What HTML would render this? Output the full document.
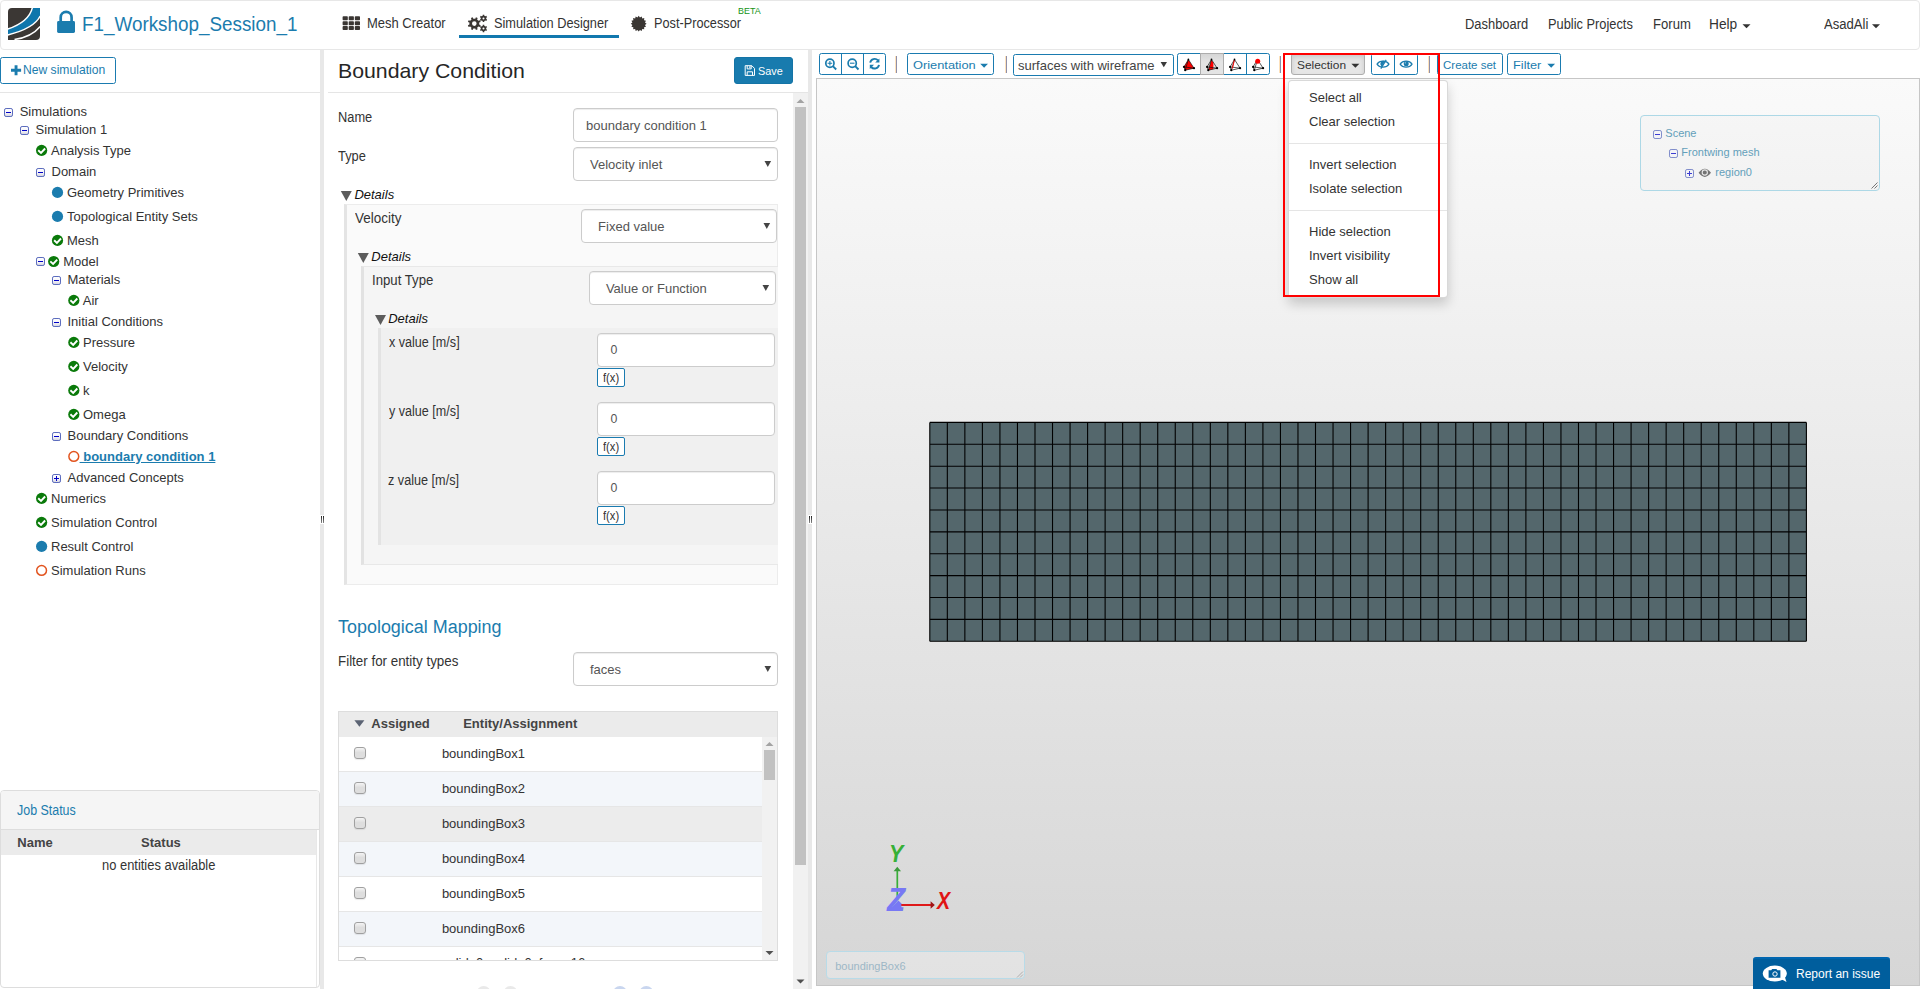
<!DOCTYPE html>
<html lang="en">
<head>
<meta charset="utf-8">
<title>F1_Workshop_Session_1 - Simulation Designer</title>
<style>
*{box-sizing:border-box;margin:0;padding:0}
html,body{width:1920px;height:989px;overflow:hidden;background:#fff}
body{position:relative;font-family:"Liberation Sans",sans-serif;font-size:13px;color:#333}
.a{position:absolute}
.t{position:absolute;white-space:nowrap;line-height:1;transform-origin:0 0}
svg{position:absolute;overflow:visible}
.g{position:absolute;left:0;top:0;width:0;height:0}
#hdrbox{position:absolute;left:0;top:0;width:1920px;height:50px;background:#fff;border:1px solid #e7e7e7;border-radius:4px}
.sp{position:absolute;top:50px;width:4px;height:939px;background:#e8e8e8}
.btn{position:absolute;border:1px solid #1a7bb0;border-radius:2.5px;background:#fff}
.inp{position:absolute;border:1px solid #ccc;border-radius:4px;background:#fff;box-shadow:inset 0 1px 1px rgba(0,0,0,.075)}
</style>
</head>
<body>
<div id="hdrbox"></div>
<div class="g" id="hdr">
<svg style="left:8px;top:8px" width="32" height="32" viewBox="8 8 32 32">
<path d="M12,8 H40 V36 A4,4 0 0 1 36,40 H8 V12 A4,4 0 0 1 12,8 Z" fill="#3b3734"/>
<path d="M32.3,8 L40,8 L40,16.3 Q34,28.5 8,34.8 L8,28.9 Q28.85,22 32.3,8 Z" fill="#0e76ac"/>
<path d="M32.4,7.6 Q28.85,22 7.8,29" fill="none" stroke="#fff" stroke-width="1.5"/>
<path d="M40.2,16 Q34,28.5 7.8,34.9" fill="none" stroke="#fff" stroke-width="1.5"/>
<path d="M40.2,26.5 Q31.55,36.95 14.5,39.6" fill="none" stroke="#fff" stroke-width="1.5"/>
</svg>
<svg style="left:57px;top:10px" width="18" height="23" viewBox="57 10 18 23">
<path d="M60.7,21.5 V17.4 A5.45,5.45 0 0 1 71.6,17.4 V21.5" fill="none" stroke="#1b7cae" stroke-width="2.7"/>
<rect x="57.1" y="21" width="17.9" height="11.9" rx="1.4" fill="#1b7cae"/>
</svg>
<span class="t" style="left:82.25px;top:14.69px;font-size:19.5px;color:#1b7cae;transform:scaleX(0.9665);">F1_Workshop_Session_1</span>
<svg style="left:0;top:0" width="1" height="1"><g fill="#3a3633"><rect x="342.6" y="16.3" width="5.2" height="4" rx="0.8"/><rect x="342.6" y="21.2" width="5.2" height="4" rx="0.8"/><rect x="342.6" y="26.1" width="5.2" height="4" rx="0.8"/><rect x="348.7" y="16.3" width="5.2" height="4" rx="0.8"/><rect x="348.7" y="21.2" width="5.2" height="4" rx="0.8"/><rect x="348.7" y="26.1" width="5.2" height="4" rx="0.8"/><rect x="354.8" y="16.3" width="5.2" height="4" rx="0.8"/><rect x="354.8" y="21.2" width="5.2" height="4" rx="0.8"/><rect x="354.8" y="26.1" width="5.2" height="4" rx="0.8"/></g></svg>
<span class="t" style="left:367.33px;top:16.15px;font-size:14px;transform:scaleX(0.9277);">Mesh Creator</span>
<span class="t" style="left:494.32px;top:16.15px;font-size:14px;transform:scaleX(0.9122);">Simulation Designer</span>
<div class="a" style="left:459px;top:35px;width:160px;height:3px;background:#1278ae"></div>
<svg style="left:0;top:0" width="1" height="1"><g fill="#3a3633" fill-rule="evenodd"><path d="M479.20,24.58 L480.69,25.24 L479.98,26.96 L478.46,26.38 L477.08,27.76 L477.66,29.28 L475.94,29.99 L475.28,28.50 L473.32,28.50 L472.66,29.99 L470.94,29.28 L471.52,27.76 L470.14,26.38 L468.62,26.96 L467.91,25.24 L469.40,24.58 L469.40,22.62 L467.91,21.96 L468.62,20.24 L470.14,20.82 L471.52,19.44 L470.94,17.92 L472.66,17.21 L473.32,18.70 L475.28,18.70 L475.94,17.21 L477.66,17.92 L477.08,19.44 L478.46,20.82 L479.98,20.24 L480.69,21.96 L479.20,22.62 Z M476.60,23.60 A2.3,2.3 0 1 0 472.00,23.60 A2.3,2.3 0 1 0 476.60,23.60 Z"/><path d="M486.22,19.05 L487.11,19.58 L486.33,20.94 L485.43,20.43 L484.30,21.08 L484.28,22.12 L482.72,22.12 L482.70,21.08 L481.57,20.43 L480.67,20.94 L479.89,19.58 L480.78,19.05 L480.78,17.75 L479.89,17.22 L480.67,15.86 L481.57,16.37 L482.70,15.72 L482.72,14.68 L484.28,14.68 L484.30,15.72 L485.43,16.37 L486.33,15.86 L487.11,17.22 L486.22,17.75 Z M484.50,18.40 A1.0,1.0 0 1 0 482.50,18.40 A1.0,1.0 0 1 0 484.50,18.40 Z"/><path d="M486.22,29.15 L487.11,29.68 L486.33,31.04 L485.43,30.53 L484.30,31.18 L484.28,32.22 L482.72,32.22 L482.70,31.18 L481.57,30.53 L480.67,31.04 L479.89,29.68 L480.78,29.15 L480.78,27.85 L479.89,27.32 L480.67,25.96 L481.57,26.47 L482.70,25.82 L482.72,24.78 L484.28,24.78 L484.30,25.82 L485.43,26.47 L486.33,25.96 L487.11,27.32 L486.22,27.85 Z M484.50,28.50 A1.0,1.0 0 1 0 482.50,28.50 A1.0,1.0 0 1 0 484.50,28.50 Z"/><path d="M646.60,23.70 L644.98,24.95 L646.00,26.72 L644.02,27.26 L644.29,29.29 L642.26,29.02 L641.72,31.00 L639.95,29.98 L638.70,31.60 L637.45,29.98 L635.68,31.00 L635.14,29.02 L633.11,29.29 L633.38,27.26 L631.40,26.72 L632.42,24.95 L630.80,23.70 L632.42,22.45 L631.40,20.68 L633.38,20.14 L633.11,18.11 L635.14,18.38 L635.68,16.40 L637.45,17.42 L638.70,15.80 L639.95,17.42 L641.72,16.40 L642.26,18.38 L644.29,18.11 L644.02,20.14 L646.00,20.68 L644.98,22.45 Z"/></g></svg>
<span class="t" style="left:653.56px;top:16.15px;font-size:14px;transform:scaleX(0.9086);">Post-Processor</span>
<span class="t" style="left:738.17px;top:7.11px;font-size:9.2px;color:#159415;transform:scaleX(0.9709);">BETA</span>
<span class="t" style="left:1465.14px;top:17.15px;font-size:14px;transform:scaleX(0.9225);">Dashboard</span>
<span class="t" style="left:1548.15px;top:17.15px;font-size:14px;transform:scaleX(0.9160);">Public Projects</span>
<span class="t" style="left:1652.63px;top:17.15px;font-size:14px;transform:scaleX(0.9353);">Forum</span>
<span class="t" style="left:1709.38px;top:17.15px;font-size:14px;transform:scaleX(0.9793);">Help</span>
<span class="t" style="left:1823.97px;top:17.15px;font-size:14px;transform:scaleX(0.9355);">AsadAli</span>
<svg style="left:0;top:0" width="1" height="1"><path d="M1742.5,24.3 h8 l-4,4 z M1872,24.3 h8 l-4,4 z" fill="#333"/></svg>
</div>
<div class="g" id="left">
<div class="btn" style="left:0;top:57px;width:116px;height:27px"></div>
<svg style="left:0;top:0" width="1" height="1"><path d="M11,68.8 h3.6 v-3.5 h2.9 v3.5 h3.6 v2.9 h-3.6 v3.5 h-2.9 v-3.5 h-3.6 z" fill="#1b7cae"/></svg>
<span class="t" style="left:22.80px;top:64.83px;font-size:11.9px;color:#1b7cae;transform:scaleX(1.0193);">New simulation</span>
<div class="a" style="left:0;top:92px;width:320px;height:1px;background:#e5e5e5"></div>
<svg style="left:0;top:0" width="1" height="1"><defs><linearGradient id="eg" x1="0" y1="0" x2="0" y2="1"><stop offset="0" stop-color="#fff"/><stop offset=".55" stop-color="#f4f4f8"/><stop offset="1" stop-color="#d2d2dc"/></linearGradient></defs><rect x="4.5" y="108.5" width="8" height="8" rx="1.6" fill="url(#eg)" stroke="#5a6bbd"/><rect x="6" y="112" width="5" height="1" fill="#0000c8"/><rect x="20.5" y="126.5" width="8" height="8" rx="1.6" fill="url(#eg)" stroke="#5a6bbd"/><rect x="22" y="130" width="5" height="1" fill="#0000c8"/><circle cx="41.6" cy="150.4" r="5.6" fill="#0a7a0a"/><path d="M38.2,150.3 L41.0,152.9 L45.1,148.5" fill="none" stroke="#fff" stroke-width="1.9"/><rect x="36.5" y="168.5" width="8" height="8" rx="1.6" fill="url(#eg)" stroke="#5a6bbd"/><rect x="38" y="172" width="5" height="1" fill="#0000c8"/><circle cx="57.5" cy="192.4" r="5.6" fill="#1b7cae"/><circle cx="57.5" cy="216.4" r="5.6" fill="#1b7cae"/><circle cx="57.5" cy="240.4" r="5.6" fill="#0a7a0a"/><path d="M54.1,240.3 L56.9,242.9 L61.0,238.5" fill="none" stroke="#fff" stroke-width="1.9"/><rect x="36.5" y="257.5" width="8" height="8" rx="1.6" fill="url(#eg)" stroke="#5a6bbd"/><rect x="38" y="261" width="5" height="1" fill="#0000c8"/><circle cx="53.7" cy="261.5" r="5.6" fill="#0a7a0a"/><path d="M50.300000000000004,261.4 L53.1,264.0 L57.2,259.6" fill="none" stroke="#fff" stroke-width="1.9"/><rect x="52.5" y="276.5" width="8" height="8" rx="1.6" fill="url(#eg)" stroke="#5a6bbd"/><rect x="54" y="280" width="5" height="1" fill="#0000c8"/><circle cx="73.8" cy="300.4" r="5.6" fill="#0a7a0a"/><path d="M70.39999999999999,300.29999999999995 L73.2,302.9 L77.3,298.5" fill="none" stroke="#fff" stroke-width="1.9"/><rect x="52.5" y="318.5" width="8" height="8" rx="1.6" fill="url(#eg)" stroke="#5a6bbd"/><rect x="54" y="322" width="5" height="1" fill="#0000c8"/><circle cx="73.8" cy="342.4" r="5.6" fill="#0a7a0a"/><path d="M70.39999999999999,342.29999999999995 L73.2,344.9 L77.3,340.5" fill="none" stroke="#fff" stroke-width="1.9"/><circle cx="73.8" cy="366.4" r="5.6" fill="#0a7a0a"/><path d="M70.39999999999999,366.29999999999995 L73.2,368.9 L77.3,364.5" fill="none" stroke="#fff" stroke-width="1.9"/><circle cx="73.8" cy="390.4" r="5.6" fill="#0a7a0a"/><path d="M70.39999999999999,390.29999999999995 L73.2,392.9 L77.3,388.5" fill="none" stroke="#fff" stroke-width="1.9"/><circle cx="73.8" cy="414.4" r="5.6" fill="#0a7a0a"/><path d="M70.39999999999999,414.29999999999995 L73.2,416.9 L77.3,412.5" fill="none" stroke="#fff" stroke-width="1.9"/><rect x="52.5" y="432.5" width="8" height="8" rx="1.6" fill="url(#eg)" stroke="#5a6bbd"/><rect x="54" y="436" width="5" height="1" fill="#0000c8"/><circle cx="73.8" cy="456.4" r="4.9" fill="#fff" stroke="#e2541f" stroke-width="1.5"/><rect x="52.5" y="474.5" width="8" height="8" rx="1.6" fill="url(#eg)" stroke="#5a6bbd"/><rect x="54" y="478" width="5" height="1" fill="#0000c8"/><rect x="56" y="476" width="1" height="5" fill="#0000c8"/><circle cx="41.6" cy="498.4" r="5.6" fill="#0a7a0a"/><path d="M38.2,498.29999999999995 L41.0,500.9 L45.1,496.5" fill="none" stroke="#fff" stroke-width="1.9"/><circle cx="41.6" cy="522.4" r="5.6" fill="#0a7a0a"/><path d="M38.2,522.3 L41.0,524.9 L45.1,520.5" fill="none" stroke="#fff" stroke-width="1.9"/><circle cx="41.6" cy="546.4" r="5.6" fill="#1b7cae"/><circle cx="41.6" cy="570.4" r="4.9" fill="#fff" stroke="#e2541f" stroke-width="1.5"/></svg>
<span class="t" style="left:19.70px;top:105.10px;font-size:13px;">Simulations</span>
<span class="t" style="left:35.60px;top:123.10px;font-size:13px;">Simulation 1</span>
<span class="t" style="left:51.00px;top:144.10px;font-size:13px;">Analysis Type</span>
<span class="t" style="left:51.50px;top:165.00px;font-size:13px;">Domain</span>
<span class="t" style="left:67.00px;top:186.00px;font-size:13px;">Geometry Primitives</span>
<span class="t" style="left:67.00px;top:210.00px;font-size:13px;">Topological Entity Sets</span>
<span class="t" style="left:67.00px;top:234.00px;font-size:13px;">Mesh</span>
<span class="t" style="left:63.20px;top:254.80px;font-size:13px;">Model</span>
<span class="t" style="left:67.50px;top:273.20px;font-size:13px;">Materials</span>
<span class="t" style="left:82.80px;top:294.00px;font-size:13px;">Air</span>
<span class="t" style="left:67.50px;top:315.00px;font-size:13px;">Initial Conditions</span>
<span class="t" style="left:83.00px;top:336.10px;font-size:13px;">Pressure</span>
<span class="t" style="left:83.00px;top:360.10px;font-size:13px;">Velocity</span>
<span class="t" style="left:83.00px;top:384.10px;font-size:13px;">k</span>
<span class="t" style="left:83.00px;top:408.10px;font-size:13px;">Omega</span>
<span class="t" style="left:67.50px;top:429.10px;font-size:13px;">Boundary Conditions</span>
<span class="t" style="left:67.50px;top:471.10px;font-size:13px;">Advanced Concepts</span>
<span class="t" style="left:51.00px;top:492.10px;font-size:13px;">Numerics</span>
<span class="t" style="left:51.00px;top:516.10px;font-size:13px;">Simulation Control</span>
<span class="t" style="left:51.00px;top:540.10px;font-size:13px;">Result Control</span>
<span class="t" style="left:51.00px;top:564.10px;font-size:13px;">Simulation Runs</span>
<span class="t" style="left:79.60px;top:449.70px;font-size:13px;color:#1b7cae;font-weight:700;text-decoration:underline;"> boundary condition 1</span>
<div class="a" style="left:0px;top:790px;width:320px;height:198px;border:1px solid #ddd;border-radius:4px;background:#fff"></div>
<div class="a" style="left:1px;top:791px;width:318px;height:39px;background:#f5f5f5;border-bottom:1px solid #ddd;border-radius:3px 3px 0 0"></div>
<span class="t" style="left:16.71px;top:802.55px;font-size:14px;color:#1b7cae;transform:scaleX(0.8879);">Job Status</span>
<div class="a" style="left:1px;top:830px;width:315px;height:25px;background:#ebebeb"></div>
<div class="a" style="left:316px;top:830px;width:1px;height:157px;background:#e8e8e8"></div>
<span class="t" style="left:17.30px;top:836.00px;font-size:13px;color:#444;font-weight:700;">Name</span>
<span class="t" style="left:141.10px;top:836.00px;font-size:13px;color:#444;font-weight:700;">Status</span>
<span class="t" style="left:102.04px;top:857.85px;font-size:14px;transform:scaleX(0.9223);">no entities available</span>
</div>
<div class="sp" style="left:320px"></div>
<div class="g" id="mid">
<span class="t" style="left:337.65px;top:60.60px;font-size:20.2px;color:#262626;transform:scaleX(1.0536);">Boundary Condition</span>
<div class="a" style="left:734px;top:57px;width:59px;height:27px;background:#187bae;border:1px solid #1474a6;border-radius:3px"></div>
<svg style="left:0;top:0" width="1" height="1"><g fill="none" stroke="#fff" stroke-width="1">
<path d="M745.2,65.7 h6.6 l2.7,2.7 v7 h-9.3 z"/><path d="M747.2,65.7 v3.2 h4 v-3.2"/><path d="M747.2,75.4 v-3.6 h5.3 v3.6"/></g><rect x="749.3" y="66.2" width="1.1" height="2" fill="#fff"/></svg>
<span class="t" style="left:757.71px;top:65.18px;font-size:11.6px;color:#fff;transform:scaleX(0.9372);">Save</span>
<div class="a" style="left:328px;top:92px;width:480px;height:1px;background:#e5e5e5"></div>
<div class="a" style="left:793px;top:93px;width:15px;height:896px;background:#f1f1f1"></div>
<div class="a" style="left:795px;top:107px;width:11px;height:758px;background:#c1c1c1"></div>
<svg style="left:0;top:0" width="1" height="1"><path d="M796.5,103 h8 l-4,-4 z" fill="#a3a3a3"/><path d="M796.5,979.5 h8 l-4,4 z" fill="#505050"/></svg>
<div class="a" style="left:344px;top:204px;width:434px;height:381px;background:#fafafa;border:1px solid #ececec;border-left:3px solid #e4e4e4"></div>
<div class="a" style="left:361px;top:266px;width:417px;height:299px;background:#f5f5f5;border:1px solid #e8e8e8;border-left:3px solid #e2e2e2;border-right:0"></div>
<div class="a" style="left:378px;top:328px;width:400px;height:217px;background:#f0f0f0;border-left:3px solid #e3e3e3"></div>
<span class="t" style="left:338.15px;top:109.95px;font-size:14px;transform:scaleX(0.9160);">Name</span>
<span class="t" style="left:337.91px;top:148.95px;font-size:14px;transform:scaleX(0.9177);">Type</span>
<span class="t" style="left:355.14px;top:210.95px;font-size:14px;transform:scaleX(0.9614);">Velocity</span>
<span class="t" style="left:372.08px;top:272.95px;font-size:14px;transform:scaleX(0.9426);">Input Type</span>
<span class="t" style="left:388.76px;top:335.05px;font-size:14px;transform:scaleX(0.8988);">x value [m/s]</span>
<span class="t" style="left:388.87px;top:404.05px;font-size:14px;transform:scaleX(0.8974);">y value [m/s]</span>
<span class="t" style="left:388.39px;top:473.05px;font-size:14px;transform:scaleX(0.9036);">z value [m/s]</span>
<div class="inp" style="left:573px;top:108px;width:205px;height:34px"></div>
<span class="t" style="left:586.10px;top:119.40px;font-size:13px;color:#555;">boundary condition 1</span>
<div class="inp" style="left:573px;top:147px;width:205px;height:34px"></div>
<span class="t" style="left:590.00px;top:158.30px;font-size:13px;color:#555;">Velocity inlet</span>
<div class="inp" style="left:581px;top:209px;width:196px;height:34px"></div>
<span class="t" style="left:598.10px;top:220.00px;font-size:13px;color:#555;">Fixed value</span>
<div class="inp" style="left:589px;top:271px;width:187px;height:34px"></div>
<span class="t" style="left:605.90px;top:282.00px;font-size:13px;color:#555;">Value or Function</span>
<div class="inp" style="left:573px;top:652px;width:205px;height:34px"></div>
<span class="t" style="left:590.00px;top:662.70px;font-size:13px;color:#555;">faces</span>
<div class="inp" style="left:597px;top:333px;width:178px;height:34px"></div>
<span class="t" style="left:610.40px;top:344.49px;font-size:12.3px;color:#555;">0</span>
<div class="btn" style="left:597px;top:368px;width:28px;height:19px;border-radius:2px"></div>
<span class="t" style="left:603.04px;top:371.74px;font-size:12px;transform:scaleX(0.9321);">f(x)</span>
<div class="inp" style="left:597px;top:402px;width:178px;height:34px"></div>
<span class="t" style="left:610.40px;top:413.49px;font-size:12.3px;color:#555;">0</span>
<div class="btn" style="left:597px;top:437px;width:28px;height:19px;border-radius:2px"></div>
<span class="t" style="left:603.04px;top:440.74px;font-size:12px;transform:scaleX(0.9321);">f(x)</span>
<div class="inp" style="left:597px;top:471px;width:178px;height:34px"></div>
<span class="t" style="left:610.40px;top:482.49px;font-size:12.3px;color:#555;">0</span>
<div class="btn" style="left:597px;top:506px;width:28px;height:19px;border-radius:2px"></div>
<span class="t" style="left:603.04px;top:509.74px;font-size:12px;transform:scaleX(0.9321);">f(x)</span>
<span class="t" style="left:354.40px;top:187.90px;font-size:13px;color:#111;font-style:italic;">Details</span>
<span class="t" style="left:371.30px;top:249.70px;font-size:13px;color:#111;font-style:italic;">Details</span>
<span class="t" style="left:388.20px;top:311.60px;font-size:13px;color:#111;font-style:italic;">Details</span>
<svg style="left:0;top:0" width="1" height="1"><path d="M764.5,161 h6.6 l-3.3,6 z" fill="#444"/><path d="M763.5,223 h6.6 l-3.3,6 z" fill="#444"/><path d="M762.5,285 h6.6 l-3.3,6 z" fill="#444"/><path d="M764.5,666 h6.6 l-3.3,6 z" fill="#444"/><path d="M340.8,191 h11 l-5.5,10 z" fill="#5c5c5c"/><path d="M357.8,253 h11 l-5.5,10 z" fill="#5c5c5c"/><path d="M375,315 h11 l-5.5,10 z" fill="#5c5c5c"/></svg>
<span class="t" style="left:337.80px;top:617.76px;font-size:18px;color:#1b7cae;transform:scaleX(0.9966);">Topological Mapping</span>
<span class="t" style="left:338.10px;top:654.15px;font-size:14px;transform:scaleX(0.9550);">Filter for entity types</span>
<div class="a" style="left:338px;top:711px;width:440px;height:250px;border:1px solid #ddd;background:#fff;overflow:hidden" id="tbl"><div class="a" style="left:0;top:0;width:438px;height:25px;background:#ebebeb"></div><div class="a" style="left:0;top:59px;width:423px;height:35px;background:#f3f6fa;border-top:1px solid #e6e6e6"></div><div class="a" style="left:0;top:94px;width:423px;height:35px;background:#ececec;border-top:1px solid #e6e6e6"></div><div class="a" style="left:0;top:129px;width:423px;height:35px;background:#f3f6fa;border-top:1px solid #e6e6e6"></div><div class="a" style="left:0;top:164px;width:423px;height:35px;background:#fff;border-top:1px solid #e6e6e6"></div><div class="a" style="left:0;top:199px;width:423px;height:35px;background:#f3f6fa;border-top:1px solid #e6e6e6"></div><div class="a" style="left:0;top:234px;width:423px;height:35px;background:#fff;border-top:1px solid #e6e6e6"></div><div class="a" style="left:423px;top:25px;width:15px;height:223px;background:#f1f1f1"></div><div class="a" style="left:425px;top:38px;width:11px;height:30px;background:#c1c1c1"></div><span class="t" style="left:103px;top:244px;font-size:13px">solid_0_solid_0_face_16</span><div class="a" style="left:15px;top:245px;width:12px;height:12px;border:1px solid #a0a0a0;border-radius:3px;background:#f0f0f0"></div></div>
<svg style="left:0;top:0" width="1" height="1"><path d="M354.4,720.3 h10 l-5,6.4 z" fill="#5b6373"/><path d="M765.5,746 h8 l-4,-4 z" fill="#a3a3a3"/><path d="M765.5,951 h8 l-4,4 z" fill="#505050"/></svg>
<span class="t" style="left:371.30px;top:717.00px;font-size:13px;color:#444;font-weight:700;">Assigned</span>
<span class="t" style="left:463.20px;top:717.00px;font-size:13px;color:#444;font-weight:700;">Entity/Assignment</span>
<span class="t" style="left:441.90px;top:747.00px;font-size:13px;">boundingBox1</span>
<div class="a" style="left:354px;top:747px;width:12px;height:12px;border:1px solid #a0a0a0;border-radius:3px;background:linear-gradient(#f4f4f4,#dedede 45%);box-shadow:0 1px 1px rgba(0,0,0,.08)"></div>
<span class="t" style="left:441.90px;top:782.00px;font-size:13px;">boundingBox2</span>
<div class="a" style="left:354px;top:782px;width:12px;height:12px;border:1px solid #a0a0a0;border-radius:3px;background:linear-gradient(#f4f4f4,#dedede 45%);box-shadow:0 1px 1px rgba(0,0,0,.08)"></div>
<span class="t" style="left:441.90px;top:817.00px;font-size:13px;">boundingBox3</span>
<div class="a" style="left:354px;top:817px;width:12px;height:12px;border:1px solid #a0a0a0;border-radius:3px;background:linear-gradient(#f4f4f4,#dedede 45%);box-shadow:0 1px 1px rgba(0,0,0,.08)"></div>
<span class="t" style="left:441.90px;top:852.00px;font-size:13px;">boundingBox4</span>
<div class="a" style="left:354px;top:852px;width:12px;height:12px;border:1px solid #a0a0a0;border-radius:3px;background:linear-gradient(#f4f4f4,#dedede 45%);box-shadow:0 1px 1px rgba(0,0,0,.08)"></div>
<span class="t" style="left:441.90px;top:887.00px;font-size:13px;">boundingBox5</span>
<div class="a" style="left:354px;top:887px;width:12px;height:12px;border:1px solid #a0a0a0;border-radius:3px;background:linear-gradient(#f4f4f4,#dedede 45%);box-shadow:0 1px 1px rgba(0,0,0,.08)"></div>
<span class="t" style="left:441.90px;top:922.00px;font-size:13px;">boundingBox6</span>
<div class="a" style="left:354px;top:922px;width:12px;height:12px;border:1px solid #a0a0a0;border-radius:3px;background:linear-gradient(#f4f4f4,#dedede 45%);box-shadow:0 1px 1px rgba(0,0,0,.08)"></div>
<svg style="left:0;top:0" width="1" height="1"><g fill="#e9e9e9"><circle cx="483.7" cy="993" r="7"/><circle cx="510.5" cy="993" r="7"/></g><g fill="#c9d6ef"><circle cx="620" cy="993" r="7"/><circle cx="646.3" cy="993" r="7"/></g></svg>
</div>
<div class="sp" style="left:808px"></div>
<div class="g" id="view">
<div class="a" style="left:816px;top:78px;width:1104px;height:908px;border:1px solid #c6c6c6;background:linear-gradient(#fafafa,#d6d6d6)"></div>
<svg style="left:0;top:0" width="1" height="1"><rect x="929.8" y="422.4" width="876.6" height="218.9" fill="#54676c"/><path d="M929.80,422.4 V641.3 M947.33,422.4 V641.3 M964.86,422.4 V641.3 M982.40,422.4 V641.3 M999.93,422.4 V641.3 M1017.46,422.4 V641.3 M1034.99,422.4 V641.3 M1052.52,422.4 V641.3 M1070.06,422.4 V641.3 M1087.59,422.4 V641.3 M1105.12,422.4 V641.3 M1122.65,422.4 V641.3 M1140.18,422.4 V641.3 M1157.72,422.4 V641.3 M1175.25,422.4 V641.3 M1192.78,422.4 V641.3 M1210.31,422.4 V641.3 M1227.84,422.4 V641.3 M1245.38,422.4 V641.3 M1262.91,422.4 V641.3 M1280.44,422.4 V641.3 M1297.97,422.4 V641.3 M1315.50,422.4 V641.3 M1333.04,422.4 V641.3 M1350.57,422.4 V641.3 M1368.10,422.4 V641.3 M1385.63,422.4 V641.3 M1403.16,422.4 V641.3 M1420.70,422.4 V641.3 M1438.23,422.4 V641.3 M1455.76,422.4 V641.3 M1473.29,422.4 V641.3 M1490.82,422.4 V641.3 M1508.36,422.4 V641.3 M1525.89,422.4 V641.3 M1543.42,422.4 V641.3 M1560.95,422.4 V641.3 M1578.48,422.4 V641.3 M1596.02,422.4 V641.3 M1613.55,422.4 V641.3 M1631.08,422.4 V641.3 M1648.61,422.4 V641.3 M1666.14,422.4 V641.3 M1683.68,422.4 V641.3 M1701.21,422.4 V641.3 M1718.74,422.4 V641.3 M1736.27,422.4 V641.3 M1753.80,422.4 V641.3 M1771.34,422.4 V641.3 M1788.87,422.4 V641.3 M1806.40,422.4 V641.3 M929.8,422.40 H1806.4 M929.8,444.29 H1806.4 M929.8,466.18 H1806.4 M929.8,488.07 H1806.4 M929.8,509.96 H1806.4 M929.8,531.85 H1806.4 M929.8,553.74 H1806.4 M929.8,575.63 H1806.4 M929.8,597.52 H1806.4 M929.8,619.41 H1806.4 M929.8,641.30 H1806.4 " stroke="#000" stroke-width="1.1" fill="none"/></svg>
<div class="btn" style="left:819px;top:53px;width:67px;height:22px"></div>
<div class="a" style="left:841px;top:53px;width:1px;height:22px;background:#1a7bb0"></div><div class="a" style="left:863px;top:53px;width:1px;height:22px;background:#1a7bb0"></div>
<svg style="left:0;top:0" width="1" height="1"><g fill="none" stroke="#1b7cae" stroke-width="1.7">
<circle cx="829.9" cy="63.2" r="4.1"/><path d="M832.9,66.2 L836.2,69.5" stroke-width="1.9"/><path d="M827.6,63.2 h4.6 M829.9,60.9 v4.6" stroke-width="1.1"/>
<circle cx="852.2" cy="63.2" r="4.1"/><path d="M855.2,66.2 L858.5,69.5" stroke-width="1.9"/><path d="M849.9,63.2 h4.6" stroke-width="1.1"/>
<path d="M870.2,62.6 A4.5,4.5 0 0 1 878,60.4" stroke-width="1.9"/><path d="M879,64.8 A4.5,4.5 0 0 1 871.2,67" stroke-width="1.9"/>
</g><path d="M879.4,58.4 v4.2 h-4.2 z M869.8,69 v-4.2 h4.2 z" fill="#1b7cae"/></svg>
<div class="a" style="left:895px;top:56px;width:1px;height:17px;background:#fde1bb"></div><div class="a" style="left:896px;top:56px;width:1px;height:17px;background:#8f8fa9"></div>
<div class="btn" style="left:907px;top:53px;width:87px;height:22px"></div>
<span class="t" style="left:912.69px;top:59.18px;font-size:11.6px;color:#1b7cae;transform:scaleX(1.1062);">Orientation</span>
<div class="a" style="left:1005px;top:56px;width:1px;height:17px;background:#fde1bb"></div><div class="a" style="left:1006px;top:56px;width:1px;height:17px;background:#8f8fa9"></div>
<div class="btn" style="left:1013px;top:54px;width:161px;height:22px;border-width:1.5px"></div>
<span class="t" style="left:1018.00px;top:59.10px;font-size:13px;color:#444;">surfaces with wireframe</span>
<div class="btn" style="left:1177px;top:53px;width:93px;height:22px"></div>
<div class="a" style="left:1200px;top:53px;width:24px;height:22px;background:linear-gradient(#d6d6d6,#e4e4e4 40%);border:1px solid #adadad"></div>
<div class="a" style="left:1246px;top:53px;width:1px;height:22px;background:#1a7bb0"></div>
<svg style="left:0;top:0" width="1" height="1"><path d="M1188.4,59.5 L1184.0,66.9 L1185.2,70.2 L1194.0,68.2 Z" fill="#f00"/><path d="M1188.4,59.5 L1184.0,66.9 L1185.2,70.2 L1194.0,68.2 Z M1188.4,59.5 L1185.2,70.2 M1184.0,66.9 L1194.0,68.2" fill="none" stroke="#111" stroke-width="0.7"/><circle cx="1184.0" cy="66.9" r="1.1" fill="#000"/><circle cx="1185.2" cy="70.2" r="1.1" fill="#000"/><circle cx="1194.0" cy="68.2" r="1.1" fill="#000"/><circle cx="1188.4" cy="59.5" r="0.9" fill="#000"/><path d="M1211.5,59.5 L1208.3,70.2 L1213.3,69.2 L1213.4,63 Z" fill="#f00"/><path d="M1211.5,59.5 L1207.1,66.9 L1208.3,70.2 L1217.1,68.2 Z M1211.5,59.5 L1208.3,70.2 M1207.1,66.9 L1217.1,68.2" fill="none" stroke="#111" stroke-width="0.7"/><circle cx="1207.1" cy="66.9" r="1.1" fill="#000"/><circle cx="1208.3" cy="70.2" r="1.1" fill="#000"/><circle cx="1217.1" cy="68.2" r="1.1" fill="#000"/><circle cx="1211.5" cy="59.5" r="0.9" fill="#000"/><path d="M1234.5,59.5 L1230.1,66.9 L1231.3,70.2 L1240.1,68.2 Z M1234.5,59.5 L1231.3,70.2 M1230.1,66.9 L1240.1,68.2" fill="none" stroke="#111" stroke-width="0.7"/><path d="M1234.5,59.5 L1232.4,68.5" stroke="#f00" stroke-width="1" fill="none"/><circle cx="1230.1" cy="66.9" r="1.1" fill="#000"/><circle cx="1231.3" cy="70.2" r="1.1" fill="#000"/><circle cx="1240.1" cy="68.2" r="1.1" fill="#000"/><circle cx="1234.5" cy="59.5" r="0.9" fill="#000"/><path d="M1257.5,59.5 L1253.1,66.9 L1254.3,70.2 L1263.1,68.2 Z M1257.5,59.5 L1254.3,70.2 M1253.1,66.9 L1263.1,68.2" fill="none" stroke="#111" stroke-width="0.7"/><circle cx="1253.1" cy="66.9" r="1.1" fill="#000"/><circle cx="1254.3" cy="70.2" r="1.1" fill="#000"/><circle cx="1263.1" cy="68.2" r="1.1" fill="#000"/><circle cx="1257.7" cy="61.2" r="2.5" fill="#f00"/></svg>
<div class="a" style="left:1279px;top:56px;width:1px;height:17px;background:#fde1bb"></div><div class="a" style="left:1280px;top:56px;width:1px;height:17px;background:#8f8fa9"></div>
<div class="a" style="left:1291px;top:53px;width:74px;height:22px;background:#e6e6e6;border:1px solid #adadad;border-radius:3px;box-shadow:inset 0 3px 5px rgba(0,0,0,.125)"></div>
<span class="t" style="left:1297.16px;top:59.18px;font-size:11.6px;color:#333;transform:scaleX(1.0275);">Selection</span>
<div class="btn" style="left:1371px;top:53px;width:47px;height:22px"></div>
<div class="a" style="left:1394px;top:53px;width:1px;height:22px;background:#1a7bb0"></div>
<svg style="left:0;top:0" width="1" height="1"><g fill="none" stroke="#1b7cae" stroke-width="1.1">
<path d="M1377,64.1 C1379.6,60.1 1386.4,60.1 1389,64.1 C1386.4,68.1 1379.6,68.1 1377,64.1 Z"/>
<path d="M1400.1,64.1 C1402.7,60.1 1409.5,60.1 1412.1,64.1 C1409.5,68.1 1402.7,68.1 1400.1,64.1 Z"/></g>
<path d="M1385.7,59.6 L1386.7,60.3 L1381.4,68.9 L1380.3,68.2 Z M1385.2,60.5 L1381.6,61 L1380.2,63.9 L1381.4,66.6 Z" fill="#1b7cae"/>
<circle cx="1406.2" cy="63.8" r="2.5" fill="#1b7cae"/><circle cx="1405.3" cy="62.8" r="0.6" fill="#cfe3ee"/></svg>
<div class="a" style="left:1428px;top:56px;width:1px;height:17px;background:#fde1bb"></div><div class="a" style="left:1429px;top:56px;width:1px;height:17px;background:#8f8fa9"></div>
<div class="btn" style="left:1437px;top:53px;width:66px;height:22px"></div>
<span class="t" style="left:1443.32px;top:59.18px;font-size:11.6px;color:#1b7cae;transform:scaleX(0.9919);">Create set</span>
<div class="btn" style="left:1507px;top:53px;width:54px;height:22px"></div>
<span class="t" style="left:1512.65px;top:59.18px;font-size:11.6px;color:#1b7cae;transform:scaleX(1.1007);">Filter</span>
<svg style="left:0;top:0" width="1" height="1"><path d="M980.2,63.7 h7.8 l-3.9,4 z M1547.3,63.7 h7.8 l-3.9,4 z" fill="#1b7cae"/><path d="M1351.4,63.7 h8 l-4,4 z" fill="#333"/><path d="M1160.6,62 h6.4 l-3.2,5.2 z" fill="#3a3a3a"/></svg>
<div class="a" style="left:1288px;top:80px;width:160px;height:218px;background:#fff;border:1px solid rgba(0,0,0,.15);border-radius:4px;box-shadow:0 6px 12px rgba(0,0,0,.175)"></div>
<span class="t" style="left:1309.00px;top:91.40px;font-size:13px;color:#333;">Select all</span>
<span class="t" style="left:1309.00px;top:115.40px;font-size:13px;color:#333;">Clear selection</span>
<span class="t" style="left:1309.00px;top:158.30px;font-size:13px;color:#333;">Invert selection</span>
<span class="t" style="left:1309.00px;top:182.30px;font-size:13px;color:#333;">Isolate selection</span>
<span class="t" style="left:1309.00px;top:225.40px;font-size:13px;color:#333;">Hide selection</span>
<span class="t" style="left:1309.00px;top:249.30px;font-size:13px;color:#333;">Invert visibility</span>
<span class="t" style="left:1309.00px;top:273.40px;font-size:13px;color:#333;">Show all</span>
<div class="a" style="left:1289px;top:143px;width:158px;height:1px;background:#e5e5e5"></div><div class="a" style="left:1289px;top:210px;width:158px;height:1px;background:#e5e5e5"></div>
<div class="a" style="left:1283px;top:53px;width:157px;height:244px;border:2px solid #f00"></div>
<div class="a" style="left:1640px;top:115px;width:240px;height:76px;border:1px solid #add8e6;border-radius:4px;background:rgba(0,0,0,.012)"></div>
<svg style="left:0;top:0;opacity:.75" width="1" height="1"><rect x="1653.5" y="130.5" width="8" height="8" rx="1.6" fill="#f4f4f8" stroke="#5a6bbd"/><rect x="1655" y="134" width="5" height="1" fill="#0000c8"/><rect x="1669.5" y="149.5" width="8" height="8" rx="1.6" fill="#f4f4f8" stroke="#5a6bbd"/><rect x="1671" y="153" width="5" height="1" fill="#0000c8"/><rect x="1685.5" y="169.5" width="8" height="8" rx="1.6" fill="#f4f4f8" stroke="#5a6bbd"/><rect x="1687" y="173" width="5" height="1" fill="#0000c8"/><rect x="1689" y="171" width="1" height="5" fill="#0000c8"/><path d="M1698.6,172.8 Q1704.8,164.6 1711,172.8 Q1704.8,181 1698.6,172.8 Z" fill="#4a4a4a"/><circle cx="1704.8" cy="172.5" r="2.6" fill="none" stroke="#e4e4e4" stroke-width="1.1"/></svg>
<svg style="left:0;top:0" width="1" height="1"><path d="M1871.5,188.5 L1877.5,182.5 M1874.5,188.5 L1877.5,185.5" stroke="#555" stroke-width="0.8"/><path d="M1017,977.5 L1023,971.5 M1020,977.5 L1023,974.5" stroke="#777" stroke-width="0.8"/></svg>
<span class="t" style="left:1665.30px;top:127.69px;font-size:11px;color:#639fba;">Scene</span>
<span class="t" style="left:1681.30px;top:146.89px;font-size:11px;color:#639fba;">Frontwing mesh</span>
<span class="t" style="left:1715.30px;top:167.29px;font-size:11px;color:#639fba;">region0</span>
<div class="a" style="left:826px;top:951px;width:199px;height:28px;border:1px solid #b8dbe8;border-radius:4px;background:rgba(255,255,255,.3)"></div>
<span class="t" style="left:835.20px;top:960.59px;font-size:11px;color:#9db7c6;">boundingBox6</span>
<svg style="left:0;top:0" width="1" height="1"><path d="M897.3,870 V900" stroke="#38ae38" stroke-width="1.7"/><path d="M893.6,871.2 L897.3,866.8 L901,871.2 Z" fill="#3c9a3c"/>
<path d="M900,905 H931" stroke="#e01010" stroke-width="1.9"/><path d="M930.6,901.2 L934.8,905 L930.6,908.8 Z" fill="#a01414"/></svg>
<span class="t" style="left:889.10px;top:841.58px;font-size:24px;color:#36b036;font-weight:700;font-style:italic;transform:scaleX(0.8921);">Y</span>
<span class="t" style="left:937.11px;top:889.56px;font-size:23.2px;color:#e01414;font-weight:700;font-style:italic;transform:scaleX(0.8536);">X</span>
<span class="t" style="left:887.20px;top:882.56px;font-size:33.6px;color:#7878f4;font-weight:700;font-style:italic;transform:scaleX(0.8858);">Z</span>
<svg style="left:0;top:0" width="1" height="1"><path d="M890.5,908.5 L901.6,908.5 L901.2,903.2 L898.4,900.6 Z" fill="#7878f4"/></svg>
<div class="a" style="left:1753px;top:957px;width:137px;height:40px;background:#005e9d;border-top:2px solid #0066b0;border-radius:3px 3px 0 0"></div>
<svg style="left:0;top:0" width="1" height="1"><ellipse cx="1774.8" cy="973.6" rx="12" ry="8" fill="#fff"/><path d="M1781,979 L1786.5,982 L1784.5,976 Z" fill="#fff"/>
<path d="M1768.6,970.2 h2.6 l1,-1.3 h4.2 l1,1.3 h3 v7.6 h-11.8 z" fill="#005e9d"/><circle cx="1775" cy="974" r="2.2" fill="none" stroke="#fff" stroke-width="1"/></svg>
<span class="t" style="left:1796.41px;top:968.44px;font-size:12px;color:#fff;transform:scaleX(1.0021);">Report an issue</span>
<div class="a" style="left:320px;top:515px;width:4px;height:9px;background:#fff"></div><div class="a" style="left:321px;top:516px;width:1px;height:7px;background:linear-gradient(#222,#888)"></div><div class="a" style="left:323px;top:516px;width:1px;height:7px;background:linear-gradient(#222,#888)"></div><div class="a" style="left:808px;top:515px;width:4px;height:9px;background:#fff"></div><div class="a" style="left:809px;top:516px;width:1px;height:7px;background:linear-gradient(#222,#888)"></div><div class="a" style="left:811px;top:516px;width:1px;height:7px;background:linear-gradient(#222,#888)"></div>
</div>
</body>
</html>
